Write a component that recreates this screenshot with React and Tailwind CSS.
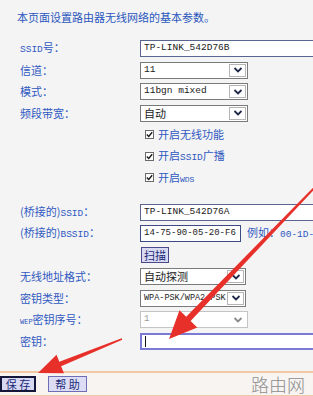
import React from 'react';

const cjk = "font-['Noto_Sans_CJK_SC',sans-serif]";
const mono = "font-['Liberation_Mono','Noto_Sans_CJK_SC',monospace]";

function Chevron({ disabled }) {
  return (
    <svg width="10" height="8" viewBox="0 0 10 8">
      <path
        d="M1.5 2 L5 5.5 L8.5 2"
        fill="none"
        stroke={disabled ? '#8a8a8a' : '#1f2a4a'}
        strokeWidth="1.8"
      />
    </svg>
  );
}

function Select({ children, className, disabled }) {
  return (
    <div className={`flex shrink-0 h-[17px] border border-[#7a7a7a] bg-white ${className}`}>
      <div className="flex-1 min-w-0 overflow-hidden whitespace-nowrap pl-[3px] flex items-center">
        {children}
      </div>
      <div className={`w-[17px] m-[1px] flex items-center justify-center border ${disabled ? 'border-transparent' : 'border-[#b5b5b5]'} bg-white`}>
        <Chevron disabled={disabled} />
      </div>
    </div>
  );
}

function Row({ label, children }) {
  return (
    <div className="flex items-center h-[21.5px]">
      <div className={`w-[120px] shrink-0 whitespace-nowrap text-[11px] leading-none text-[#3059c2] ${cjk}`}>{label}</div>
      {children}
    </div>
  );
}

function Check({ children }) {
  return (
    <div className="flex items-center h-[21.5px] pl-[125px]">
      <div className="w-[9px] h-[9px] border border-[#6a6a6a] bg-white flex items-center justify-center">
        <svg width="7" height="7" viewBox="0 0 7 7">
          <path d="M0.8 3.6 L2.7 5.4 L6.2 1.2" fill="none" stroke="#1a1a1a" strokeWidth="1.4" />
        </svg>
      </div>
      <span className={`ml-[4px] whitespace-nowrap text-[11px] leading-none text-[#3059c2] ${cjk}`}>{children}</span>
    </div>
  );
}

const Lat = ({ children, size = 'text-[9.5px]' }) => <span className={`${mono} ${size}`}>{children}</span>;

const inputCls = `shrink-0 h-[17px] bg-white pl-[3px] flex items-center whitespace-nowrap overflow-hidden text-[9.5px] text-[#222] ${mono}`;

export default function App() {
  return (
    <div className={`relative w-[313px] h-[396px] overflow-hidden bg-[#f4f4f4] ${cjk}`}>
      <div className="pt-[10px] pl-[17px] h-[24px] whitespace-nowrap text-[11px] leading-[14px] text-[#2a56bd]">
        本页面设置路由器无线网络的基本参数。
      </div>

      <div className="pl-[20px] mt-[13.75px]">
        <Row label={<><Lat>SSID</Lat>号：</>}>
          <div className={`w-[200px] border border-[#5a6590] ${inputCls}`}>TP-LINK_542D76B</div>
        </Row>
        <Row label="信道：">
          <Select className="w-[108px]"><span className={`${mono} text-[9.5px] text-[#222]`}>11</span></Select>
        </Row>
        <Row label="模式：">
          <Select className="w-[108px]"><span className={`${mono} text-[9.5px] text-[#222]`}>11bgn mixed</span></Select>
        </Row>
        <Row label="频段带宽：">
          <Select className="w-[108px]"><span className="text-[11px] text-[#222]">自动</span></Select>
        </Row>
        <Check>开启无线功能</Check>
        <Check>开启<Lat>SSID</Lat>广播</Check>
        <Check>开启<Lat size="text-[8px]">WDS</Lat></Check>
      </div>

      <div className="pl-[20px] mt-[13px]">
        <Row label={<>(桥接的)<Lat>SSID</Lat>：</>}>
          <div className={`w-[200px] border border-[#5a6590] ${inputCls}`}>TP-LINK_542D76A</div>
        </Row>
        <Row label={<>(桥接的)<Lat>BSSID</Lat>：</>}>
          <div className={`w-[101px] border border-[#3c4a86] !text-[9px] ${inputCls}`}>14-75-90-05-20-F6</div>
          <span className="ml-[6px] whitespace-nowrap text-[11px] text-[#3059c2]">
            例如：<Lat>00-1D-0F-11-22-33</Lat>
          </span>
        </Row>
        <div className="flex items-center h-[21.5px] pl-[121px]">
          <div className="h-[16px] px-[2px] flex items-center whitespace-nowrap border border-[#4a4a8a] bg-[#d9d9f2] text-[11px] text-[#1b2a78]">
            扫描
          </div>
        </div>
        <Row label="无线地址格式：">
          <Select className="w-[106px]"><span className="text-[11px] text-[#222]">自动探测</span></Select>
        </Row>
        <Row label="密钥类型：">
          <Select className="w-[106px]"><span className={`${mono} text-[8.5px] text-[#222]`}>WPA-PSK/WPA2-PSK</span></Select>
        </Row>
        <Row label={<><Lat size="text-[7px]">WEP</Lat>密钥序号：</>}>
          <Select className="w-[108px] border-[#c4c4c4]" disabled>
            <span className={`${mono} text-[9px] text-[#9a9a9a]`}>1</span>
          </Select>
        </Row>
        <Row label="密钥：">
          <div className="w-[200px] h-[17px] shrink-0 border-2 border-[#7b7bd6] bg-white pl-[3px] flex items-center">
            <div className="w-[1px] h-[11px] bg-[#111]" />
          </div>
        </Row>
      </div>

      <div className="mt-[19px] border-t-2 border-b-2 border-[#f2c7a1] bg-[#f7f4f1] h-[26px] flex items-center">
        <div className="h-[16px] w-[36px] shrink-0 flex items-center justify-center whitespace-nowrap border-2 border-[#15173a] bg-[#d8d8f2] text-[11px] text-[#1b2a78]">
          保 存
        </div>
        <div className="ml-[12px] h-[16px] w-[39px] shrink-0 flex items-center justify-center whitespace-nowrap border border-[#6e6eb8] bg-[#dcdcf4] text-[11px] text-[#1b2a78]">
          帮 助
        </div>
        <div className="ml-auto mr-[8px] whitespace-nowrap text-[18px] leading-none text-[#8e8e8e] font-light">
          路由网
        </div>
      </div>

      <svg className="absolute inset-0 pointer-events-none" width="313" height="396" viewBox="0 0 313 396">
        <polygon
          fill="#e8302a"
          points="315.3,185.3 186.2,316.7 179.5,310.2 169,339 197.3,327.4 190.6,320.9 316.7,186.7"
        />
        <polygon
          fill="#e8302a"
          points="121.7,338.3 59.3,361.7 56.5,354.7 38,373 64,373.3 61.1,366.3 122.3,339.7"
        />
      </svg>
    </div>
  );
}
